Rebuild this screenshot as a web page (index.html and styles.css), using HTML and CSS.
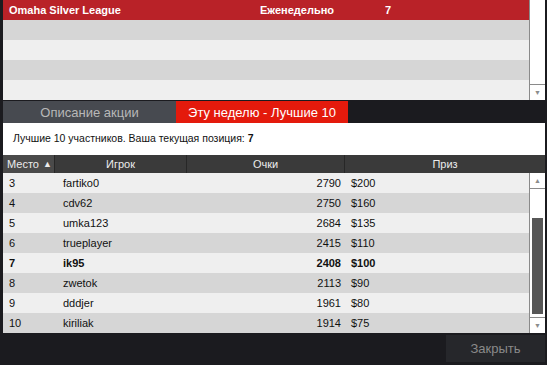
FILE: index.html
```html
<!DOCTYPE html>
<html lang="ru">
<head>
  <meta charset="UTF-8" />
  <title>Omaha Silver League</title>
  <link rel="stylesheet" href="styles.css">
</head>
<body>
  <div class="window">
    <!-- League list -->
    <section class="league">
      <div class="rows">
        <div class="row head">
          <span class="l-name">Omaha Silver League</span>
          <span class="l-period">Еженедельно</span>
          <span class="l-pos">7</span>
        </div>
        <div class="row dark"></div>
        <div class="row"></div>
        <div class="row dark"></div>
        <div class="row"></div>
      </div>
      <div class="scrollbar">
        <div class="track"></div>
        <div class="arrow down">&#9660;</div>
      </div>
    </section>

    <nav class="tabs">
      <div class="tab">Описание акции</div>
      <div class="tab active">Эту неделю - Лучшие 10</div>
    </nav>

    <p class="info">Лучшие 10 участников. Ваша текущая позиция: <b>7</b></p>

    <section class="board">
      <div class="board-head">
        <div class="col c-place sorted">Место <span class="sort">&#9650;</span></div>
        <div class="col c-player">Игрок</div>
        <div class="col c-points">Очки</div>
        <div class="col c-prize">Приз</div>
      </div>
      <div class="board-body">
        <div class="rows">
          <div class="row"><span class="c-place">3</span><span class="c-player">fartiko0</span><span class="c-points">2790</span><span class="c-prize">$200</span></div>
          <div class="row dark"><span class="c-place">4</span><span class="c-player">cdv62</span><span class="c-points">2750</span><span class="c-prize">$160</span></div>
          <div class="row"><span class="c-place">5</span><span class="c-player">umka123</span><span class="c-points">2684</span><span class="c-prize">$135</span></div>
          <div class="row dark"><span class="c-place">6</span><span class="c-player">trueplayer</span><span class="c-points">2415</span><span class="c-prize">$110</span></div>
          <div class="row me"><span class="c-place">7</span><span class="c-player">ik95</span><span class="c-points">2408</span><span class="c-prize">$100</span></div>
          <div class="row dark"><span class="c-place">8</span><span class="c-player">zwetok</span><span class="c-points">2113</span><span class="c-prize">$90</span></div>
          <div class="row"><span class="c-place">9</span><span class="c-player">dddjer</span><span class="c-points">1961</span><span class="c-prize">$80</span></div>
          <div class="row dark"><span class="c-place">10</span><span class="c-player">kiriliak</span><span class="c-points">1914</span><span class="c-prize">$75</span></div>
        </div>
        <div class="scrollbar">
          <div class="arrow up">&#9650;</div>
          <div class="track"><div class="thumb"></div></div>
          <div class="arrow down">&#9660;</div>
        </div>
      </div>
    </section>

    <footer class="footer">
      <button class="close">Закрыть</button>
    </footer>
  </div>
</body>
</html>
```

FILE: styles.css
```css
* {
  box-sizing: border-box;
  margin: 0;
  padding: 0;
}
body {
  background: #1b1b1f;
  font-family: 'Liberation Sans', Arial, sans-serif;
  font-size: 11px;
  color: #111;
}
.window {
  width: 547px;
  height: 365px;
  padding: 0 2px 0 3px;
  display: flex;
  flex-direction: column;
}
.rows {
  flex: 1;
}
.row {
  height: 20px;
  background: #efefef;
  display: flex;
  align-items: center;
}
.row.dark {
  background: #d6d6d6;
}

/* League list */
.league {
  display: flex;
  height: 100px;
}
.row.head {
  background: #b92228;
  color: #fff;
  font-weight: 700;
}
.l-name {
  padding-left: 6px;
  width: 257px;
}
.l-period {
  width: 125px;
}

/* Scrollbars */
.scrollbar {
  width: 16px;
  background: #fff;
  border-left: 1px solid #8a8a8a;
  display: flex;
  flex-direction: column;
}
.scrollbar .track {
  flex: 1;
  position: relative;
}
.arrow {
  height: 16px;
  color: #8c8c8c;
  font-size: 7px;
  display: flex;
  align-items: center;
  justify-content: center;
}
.arrow.down {
  border-top: 1px solid #8a8a8a;
}
.arrow.up {
  border-bottom: 1px solid #8a8a8a;
}
.thumb {
  position: absolute;
  left: 2px;
  right: 2px;
  top: 29px;
  bottom: 3px;
  background: #575757;
}

/* Tabs */
.tabs {
  display: flex;
  margin-top: 1px;
  height: 22px;
}
.tab {
  width: 173px;
  background: #474a50;
  color: #b8b8b8;
  font-size: 13px;
  display: flex;
  align-items: center;
  justify-content: center;
}
.tab.active {
  width: 172px;
  background: #e41a0c;
  color: #fff;
}

.info {
  background: #fff;
  height: 32px;
  padding: 0 0 2px 10px;
  font-size: 10.5px;
  display: flex;
  align-items: center;
  gap: 3px;
}

/* Leaderboard */
.board-head {
  display: flex;
  height: 18px;
  background: #3a3a3a;
  color: #ececec;
}
.board-head .col {
  display: flex;
  align-items: center;
  justify-content: center;
  border-right: 1px solid #272727;
}
.board-head .col:last-child {
  border-right: none;
}
.board-head .sorted {
  background: #4a4a4a;
  justify-content: flex-start;
  padding-left: 4px;
  gap: 4px;
}
.sort {
  font-size: 9px;
}
.board-head .c-place { width: 52px; }
.board-head .c-player { width: 132px; }
.board-head .c-points { width: 158px; }
.board-head .c-prize { flex: 1; }

.board-body {
  display: flex;
  height: 160px;
}
.board-body .row span { display: block; }
.board-body .c-place {
  width: 52px;
  padding-left: 6px;
}
.board-body .c-player {
  width: 132px;
  padding-left: 8px;
}
.board-body .c-points {
  width: 154px;
  text-align: right;
}
.board-body .c-prize {
  padding-left: 10px;
}
.row.me {
  font-weight: 700;
}

.footer {
  flex: 1;
  display: flex;
  justify-content: flex-end;
  align-items: flex-start;
  padding-top: 2px;
}
.close {
  width: 99px;
  height: 27px;
  background: #26272b;
  border: none;
  color: #8a8a8a;
  font-family: inherit;
  font-size: 13px;
}
```
